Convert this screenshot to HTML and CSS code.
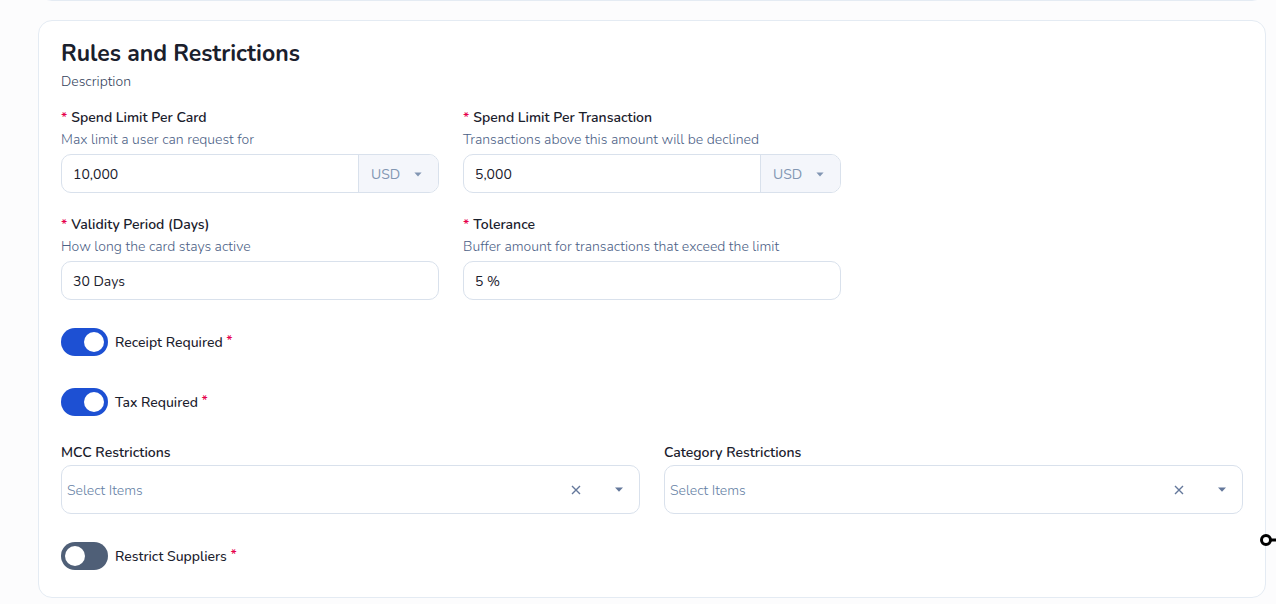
FILE: index.html
```
<!DOCTYPE html>
<html lang="en">
<head>
  <meta charset="UTF-8" />
  <meta name="viewport" content="width=device-width, initial-scale=1.0" />
  <title>Rules and Restrictions</title>
  <link rel="stylesheet" href="styles.css">
</head>
<body>
  <main class="page">
    <!-- End of the previous card -->
    <div class="card card-prev"></div>

    <form class="card rules">
      <h1>Rules and Restrictions</h1>
      <p class="description">Description</p>

      <div class="grid three">
        <div class="field">
          <label for="cardLimit"><span class="required">*</span>Spend Limit Per Card</label>
          <p class="hint">Max limit a user can request for</p>
          <div class="input-group">
            <input type="text" id="cardLimit" value="10,000" />
            <div class="currency">
              <select aria-label="Card limit currency" disabled>
                <option>USD</option>
              </select>
              <svg class="caret" viewBox="0 0 8 5"><path d="M0.4 0.5h7.2L4 4.4z" /></svg>
            </div>
          </div>
        </div>

        <div class="field">
          <label for="transactionLimit"><span class="required">*</span>Spend Limit Per Transaction</label>
          <p class="hint">Transactions above this amount will be declined</p>
          <div class="input-group">
            <input type="text" id="transactionLimit" value="5,000" />
            <div class="currency">
              <select aria-label="Transaction limit currency" disabled>
                <option>USD</option>
              </select>
              <svg class="caret" viewBox="0 0 8 5"><path d="M0.4 0.5h7.2L4 4.4z" /></svg>
            </div>
          </div>
        </div>

        <div class="field first-col">
          <label for="validity"><span class="required">*</span>Validity Period (Days)</label>
          <p class="hint">How long the card stays active</p>
          <div class="input-group">
            <input type="text" id="validity" value="30 Days" />
          </div>
        </div>

        <div class="field">
          <label for="tolerance"><span class="required">*</span>Tolerance</label>
          <p class="hint">Buffer amount for transactions that exceed the limit</p>
          <div class="input-group">
            <input type="text" id="tolerance" value="5 %" />
          </div>
        </div>
      </div>

      <div class="toggles">
        <div class="toggle">
          <input type="checkbox" id="receipt" checked />
          <label for="receipt">Receipt Required <span class="required">*</span></label>
        </div>
        <div class="toggle">
          <input type="checkbox" id="tax" checked />
          <label for="tax">Tax Required <span class="required">*</span></label>
        </div>
      </div>

      <div class="grid two">
        <div class="field">
          <label for="mcc">MCC Restrictions</label>
          <div class="multi-select">
            <input type="text" id="mcc" placeholder="Select Items" />
            <button type="button" aria-label="Clear MCC restrictions">
              <svg class="clear" viewBox="0 0 10 10"><path d="M1 1l8 8M9 1l-8 8" /></svg>
            </button>
            <button type="button" aria-label="Open MCC restrictions">
              <svg class="caret" viewBox="0 0 8 5"><path d="M0 0.5h8L4 4.8z" /></svg>
            </button>
          </div>
        </div>
        <div class="field">
          <label for="category">Category Restrictions</label>
          <div class="multi-select">
            <input type="text" id="category" placeholder="Select Items" />
            <button type="button" aria-label="Clear category restrictions">
              <svg class="clear" viewBox="0 0 10 10"><path d="M1 1l8 8M9 1l-8 8" /></svg>
            </button>
            <button type="button" aria-label="Open category restrictions">
              <svg class="caret" viewBox="0 0 8 5"><path d="M0 0.5h8L4 4.8z" /></svg>
            </button>
          </div>
        </div>
      </div>

      <div class="toggle">
        <input type="checkbox" id="suppliers" />
        <label for="suppliers">Restrict Suppliers <span class="required">*</span></label>
      </div>

      <!-- Connector pinned to the card edge -->
      <svg class="connector" viewBox="0 0 16 12">
        <path d="M11 6h5" />
        <circle cx="6" cy="6" r="4.5" />
      </svg>
    </form>
  </main>
</body>
</html>
```
FILE: styles.css
```
* {
  box-sizing: border-box;
}

body {
  margin: 0;
  font-family: Nunito, Lato, sans-serif;
  font-size: 14px;
  color: #1a202c;
  background: #fcfcfd;
  overflow: hidden;
}

h1,
p {
  margin: 0;
}

.page {
  display: flex;
  flex-direction: column;
  gap: 19px;
  margin: -40px 10px 0 38px;
}

.card {
  border: 1px solid #e4ebf3;
  border-radius: 14px;
  background: #fff;
}

.card-prev {
  height: 41px;
}

.rules {
  position: relative;
  padding: 17px 22px 27px;
}

h1 {
  font-size: 23px;
  line-height: 32px;
  font-weight: 700;
}

.description {
  margin-top: 1px;
  line-height: 22px;
  font-weight: 300;
  color: #34435c;
}

.grid {
  display: grid;
  gap: 21px 24px;
}

.three {
  grid-template-columns: repeat(3, 1fr);
  margin-top: 14px;
}

.two {
  grid-template-columns: repeat(2, 1fr);
  margin: 26px 0 28px;
}

.first-col {
  grid-column: 1;
}

.field label {
  display: block;
  line-height: 22px;
  font-weight: 600;
}

.required {
  color: #e6004c;
}

.field .required {
  margin-right: 4px;
}

.hint {
  line-height: 22px;
  font-weight: 300;
  color: #4c6186;
}

.input-group {
  display: flex;
  height: 39px;
  margin-top: 3px;
  border: 1px solid #d9e1ec;
  border-radius: 10px;
  overflow: hidden;
}

input,
select,
button {
  font: inherit;
  color: inherit;
  border: 0;
  margin: 0;
  background: none;
}

.input-group input {
  flex: 1;
  min-width: 0;
  padding: 2px 11px 0;
}

.currency {
  position: relative;
  width: 80px;
  border-left: 1px solid #d9e1ec;
  background: #f4f6fb;
}

.currency select {
  width: 100%;
  height: 100%;
  padding: 2px 12px 0;
  appearance: none;
  color: #8296b3;
  opacity: 1;
}

.caret {
  display: block;
  width: 8px;
  height: 5px;
  fill: #64789b;
}

.currency .caret {
  position: absolute;
  top: 17px;
  right: 16px;
  fill: #8296b3;
}

.toggles {
  display: flex;
  flex-direction: column;
  gap: 32px;
  margin-top: 28px;
}

.toggle {
  display: flex;
  align-items: center;
  gap: 7px;
  height: 28px;
}

.toggle label {
  padding-top: 2px;
  line-height: 22px;
  font-weight: 500;
}

.toggle .required {
  line-height: 1;
  vertical-align: 2px;
}

.toggle input {
  display: flex;
  align-items: center;
  width: 47px;
  height: 28px;
  padding: 0 4px;
  border-radius: 14px;
  appearance: none;
  background: #4f5f77;
}

.toggle input::before {
  content: "";
  width: 20px;
  height: 20px;
  border-radius: 50%;
  background: #fff;
}

.toggle input:checked {
  justify-content: flex-end;
  background: #1d50d3;
}

.multi-select {
  display: flex;
  align-items: center;
  height: 49px;
  margin-top: 1px;
  padding-right: 16px;
  border: 1px solid #d9e1ec;
  border-radius: 10px;
}

.multi-select input {
  flex: 1;
  min-width: 0;
  padding: 2px 5px 0;
  font-weight: 300;
}

.multi-select input::placeholder {
  color: #667fa5;
}

.multi-select button {
  display: flex;
  padding: 0;
  margin-left: 34px;
}

.clear {
  width: 10px;
  height: 10px;
  fill: none;
  stroke: #64789b;
  stroke-width: 1.4;
}

.connector {
  position: absolute;
  right: -11px;
  bottom: 51px;
  width: 16px;
  height: 12px;
  fill: #fff;
  stroke: #000;
  stroke-width: 3;
}
```
